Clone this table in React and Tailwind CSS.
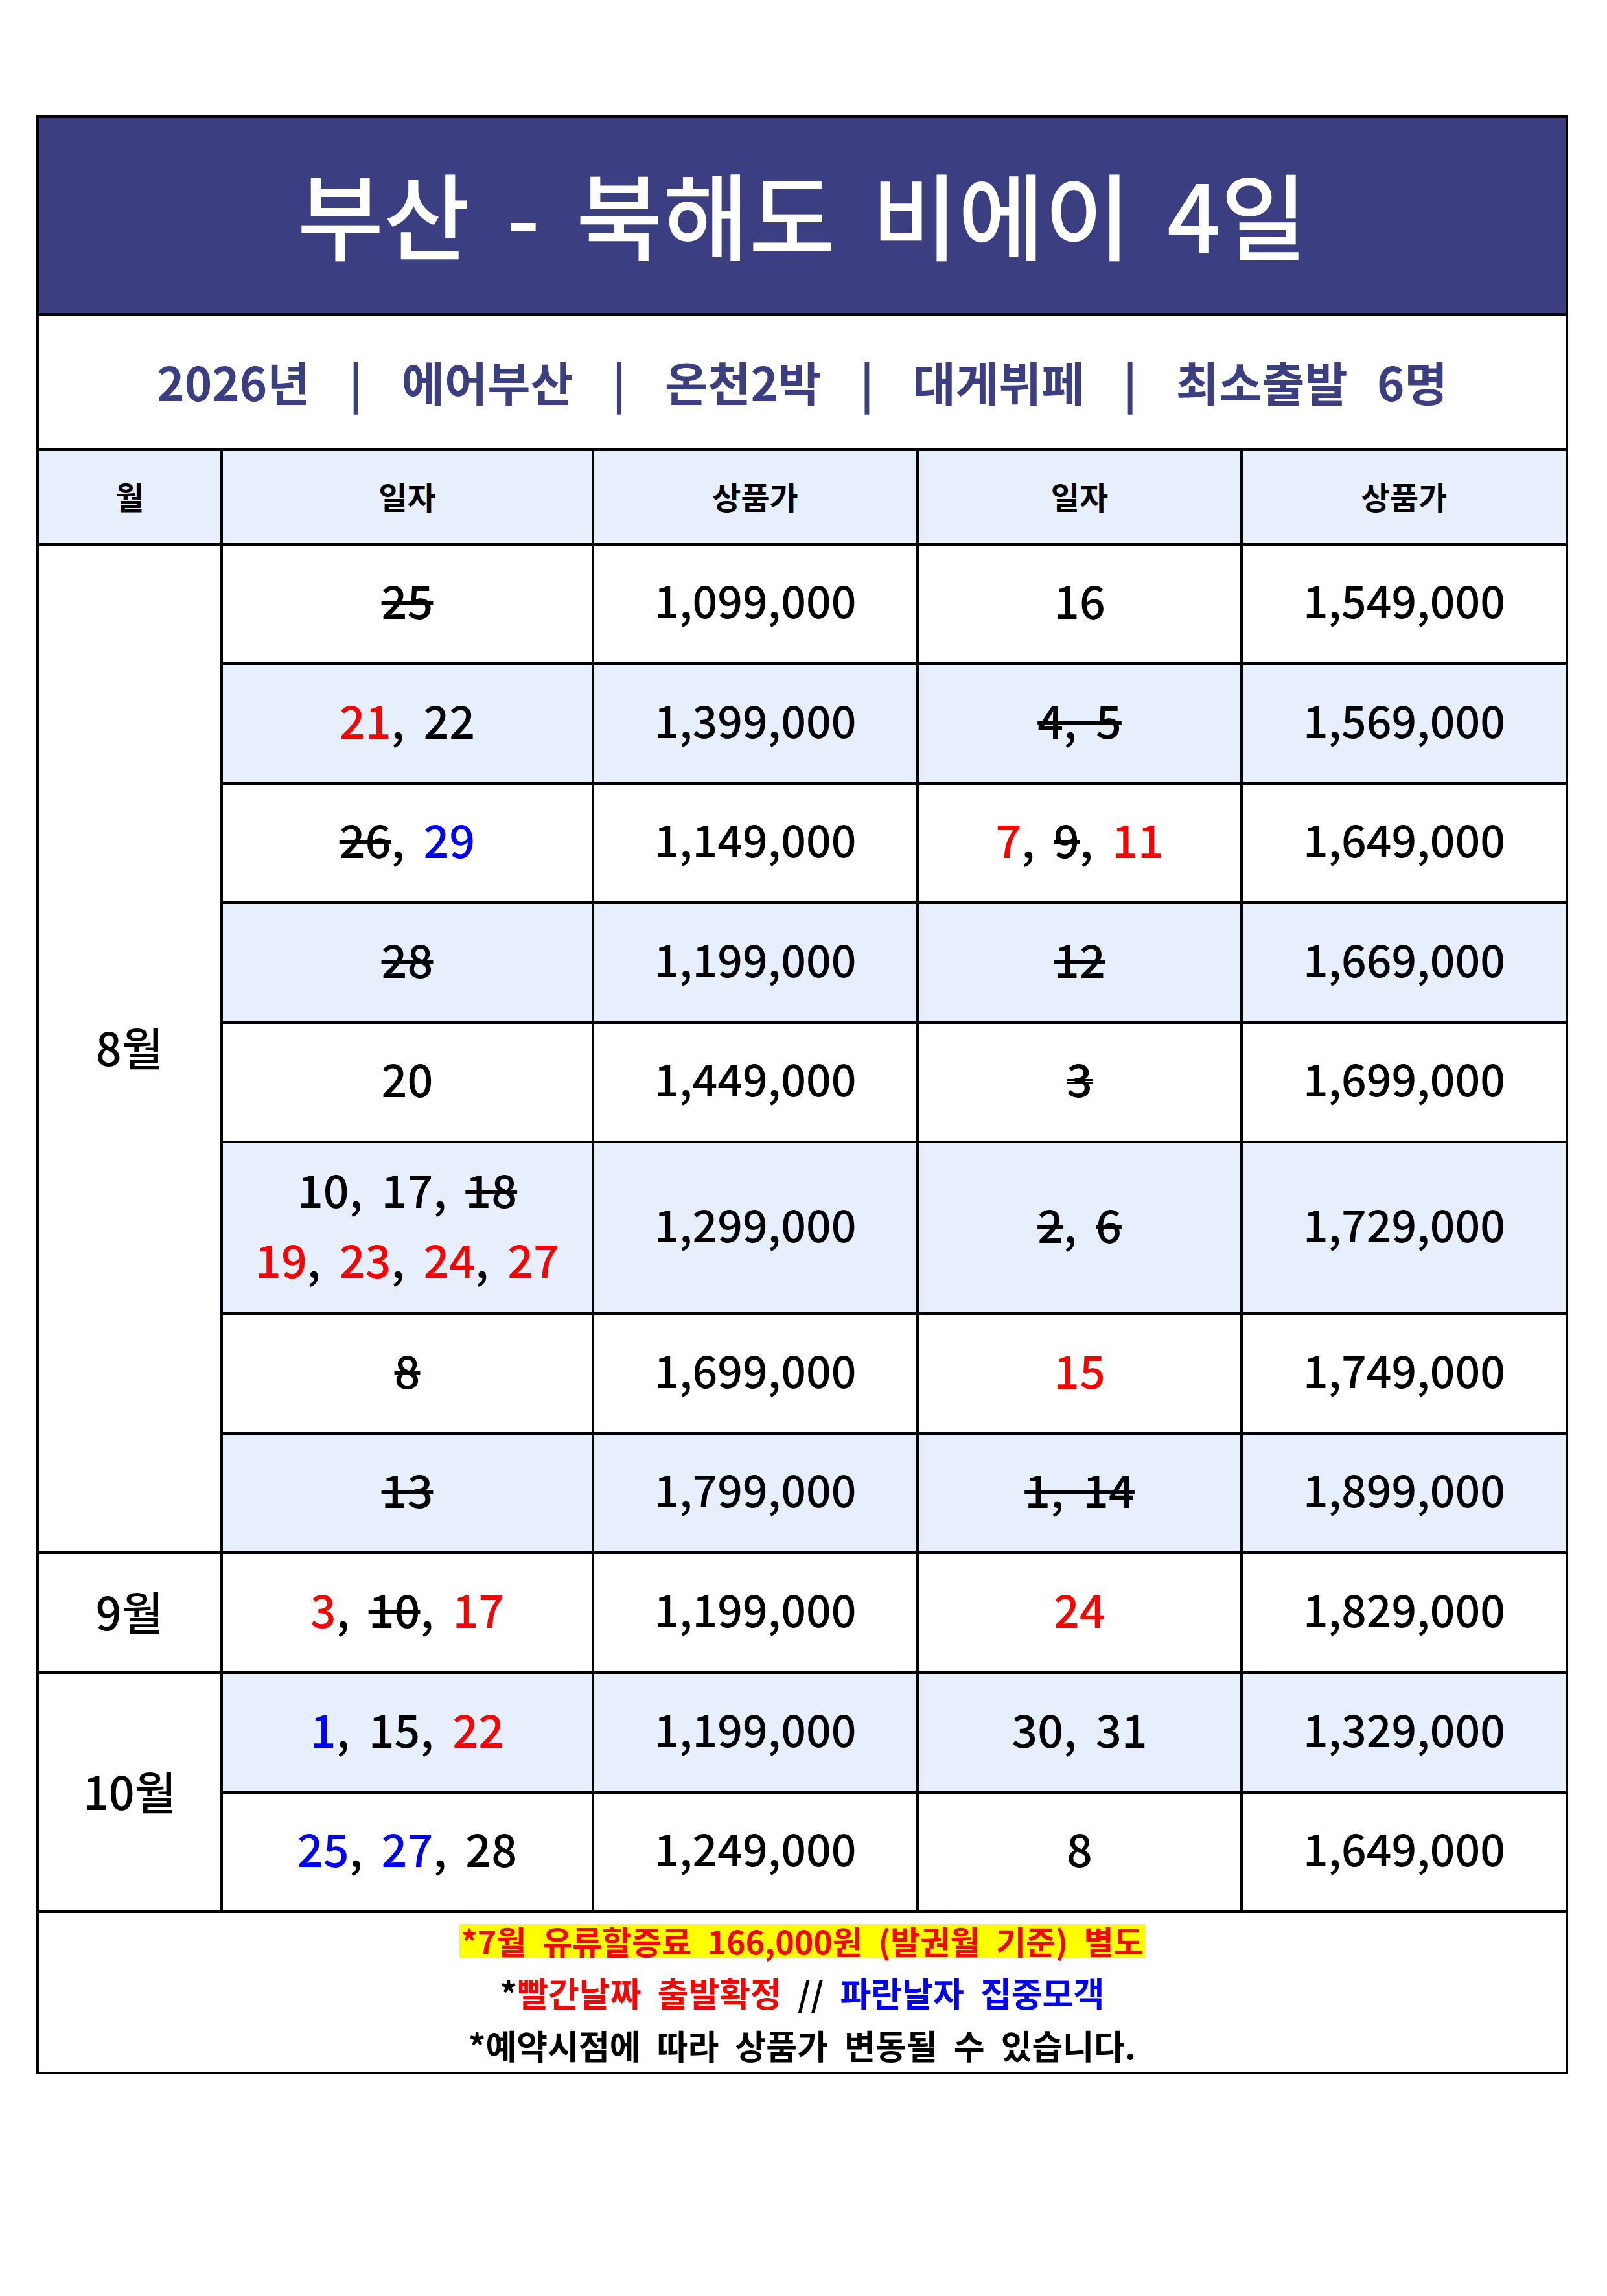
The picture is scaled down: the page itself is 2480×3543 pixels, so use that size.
const RED = 'text-[#ff0000]';
const BLUE = 'text-[#0000ff]';

// t: text, c: 'r' | 'b' | undefined, s: strike
const rows = [
  { bg: 'w', l: [[{ t: '25', s: 1 }]], lp: '1,099,000', r: [{ t: '16' }], rp: '1,549,000' },
  { bg: 'b', l: [[{ t: '21', c: 'r' }, { t: ', 22' }]], lp: '1,399,000', r: [{ t: '4, 5', s: 1 }], rp: '1,569,000' },
  { bg: 'w', l: [[{ t: '26', s: 1 }, { t: ', ' }, { t: '29', c: 'b' }]], lp: '1,149,000', r: [{ t: '7', c: 'r' }, { t: ', ' }, { t: '9', s: 1 }, { t: ', ' }, { t: '11', c: 'r' }], rp: '1,649,000' },
  { bg: 'b', l: [[{ t: '28', s: 1 }]], lp: '1,199,000', r: [{ t: '12', s: 1 }], rp: '1,669,000' },
  { bg: 'w', l: [[{ t: '20' }]], lp: '1,449,000', r: [{ t: '3', s: 1 }], rp: '1,699,000' },
  {
    bg: 'b',
    l: [
      [{ t: '10, 17, ' }, { t: '18', s: 1 }],
      [{ t: '19', c: 'r' }, { t: ', ' }, { t: '23', c: 'r' }, { t: ', ' }, { t: '24', c: 'r' }, { t: ', ' }, { t: '27', c: 'r' }],
    ],
    lp: '1,299,000',
    r: [{ t: '2', s: 1 }, { t: ', ' }, { t: '6', s: 1 }],
    rp: '1,729,000',
  },
  { bg: 'w', l: [[{ t: '8', s: 1 }]], lp: '1,699,000', r: [{ t: '15', c: 'r' }], rp: '1,749,000' },
  { bg: 'b', l: [[{ t: '13', s: 1 }]], lp: '1,799,000', r: [{ t: '1, 14', s: 1 }], rp: '1,899,000' },
  { bg: 'w', l: [[{ t: '3', c: 'r' }, { t: ', ' }, { t: '10', s: 1 }, { t: ', ' }, { t: '17', c: 'r' }]], lp: '1,199,000', r: [{ t: '24', c: 'r' }], rp: '1,829,000' },
  { bg: 'b', l: [[{ t: '1', c: 'b' }, { t: ', 15, ' }, { t: '22', c: 'r' }]], lp: '1,199,000', r: [{ t: '30, 31' }], rp: '1,329,000' },
  { bg: 'w', l: [[{ t: '25', c: 'b' }, { t: ', ' }, { t: '27', c: 'b' }, { t: ', 28' }]], lp: '1,249,000', r: [{ t: '8' }], rp: '1,649,000' },
];

function Seg({ seg }) {
  const color = seg.c === 'r' ? RED : seg.c === 'b' ? BLUE : 'text-black';
  const strike = seg.s ? 'line-through decoration-double decoration-[3px] decoration-black' : '';
  return <span className={`${color} ${strike}`}>{seg.t}</span>;
}

function Cell({ bg, children, className = '' }) {
  const bgc = bg === 'b' ? 'bg-[#e8effc]' : 'bg-white';
  return <div className={`${bgc} flex flex-col items-center justify-center pb-[14px] ${className}`}>{children}</div>;
}

function Month({ label, span }) {
  return (
    <div className={`bg-white flex items-center justify-center pb-[6px] text-[70px] leading-none text-black ${span}`}>
      {label}
    </div>
  );
}

function DataRow({ row }) {
  return (
    <>
      <Cell bg={row.bg} className="gap-[38px]">
        {row.l.map((line, i) => (
          <div key={i} className="whitespace-pre">
            {line.map((seg, j) => (
              <Seg key={j} seg={seg} />
            ))}
          </div>
        ))}
      </Cell>
      <Cell bg={row.bg} className="text-[68px]">{row.lp}</Cell>
      <Cell bg={row.bg}>
        <div className="whitespace-pre">
          {row.r.map((seg, j) => (
            <Seg key={j} seg={seg} />
          ))}
        </div>
      </Cell>
      <Cell bg={row.bg} className="text-[68px]">{row.rp}</Cell>
    </>
  );
}

export default function App() {
  return (
    <div className="w-[2480px] h-[3543px] bg-white pt-[178px] pl-[56px] font-['Noto_Sans_CJK_KR',sans-serif]">
      <div className="[word-spacing:0.19em] w-[2364px] grid grid-cols-[280px_569px_497px_496px_498px] grid-rows-[301px_205px_142px_180px_181px_180px_181px_180px_261px_181px_180px_181px_181px_180px_245px] gap-[4px] p-[4px] bg-black text-[70px] leading-none font-medium text-black">
        <div className="[word-spacing:0.16em] col-span-5 bg-[#3b3e81] flex items-center justify-center pb-[8px] text-white text-[145px] font-medium">
          부산 - 북해도 비에이 4일
        </div>
        <div className="col-span-5 bg-white flex items-center justify-center gap-[60px] pb-[4px] text-[#3b3e81] text-[72px] font-bold">
          <span>2026년</span>
          <span>|</span>
          <span>에어부산</span>
          <span>|</span>
          <span>온천2박</span>
          <span>|</span>
          <span>대게뷔페</span>
          <span>|</span>
          <span className="[word-spacing:0.4em]">최소출발 6명</span>
        </div>
        {['월', '일자', '상품가', '일자', '상품가'].map((h, i) => (
          <div key={i} className="bg-[#e8effc] flex items-center justify-center pb-[4px] text-[48px] font-bold">
            {h}
          </div>
        ))}

        <Month label="8월" span="row-span-8" />
        {rows.slice(0, 8).map((row, i) => (
          <DataRow key={i} row={row} />
        ))}
        <Month label="9월" span="" />
        <DataRow row={rows[8]} />
        <Month label="10월" span="row-span-2" />
        <DataRow row={rows[9]} />
        <DataRow row={rows[10]} />

        <div className="col-span-5 bg-white flex flex-col items-center justify-center text-[52px] font-bold leading-[81px]">
          <div>
            <span className="inline-block leading-none text-[50px] bg-[#ffff00] text-[#ff0000] px-[2px] pb-[2px]">
              *7월 유류할증료 166,000원 (발권월 기준) 별도
            </span>
          </div>
          <div>
            <span className="text-black">*</span>
            <span className={RED}>빨간날짜 출발확정</span>
            <span className="text-black"> // </span>
            <span className={BLUE}>파란날자 집중모객</span>
          </div>
          <div className="text-black">*예약시점에 따라 상품가 변동될 수 있습니다.</div>
        </div>
      </div>
    </div>
  );
}
